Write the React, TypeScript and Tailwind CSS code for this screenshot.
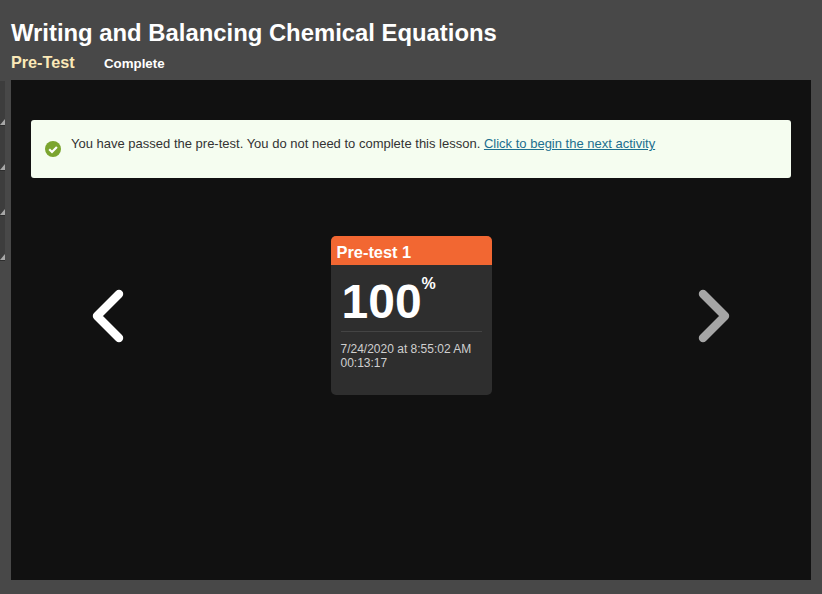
import { ChevronLeft, ChevronRight } from "lucide-react";

function RailTab() {
  return (
    <div className="relative h-[45px] w-[5px] border-b border-[#2e2e2e] bg-[#3d3d3d]">
      <span className="absolute bottom-0 right-0 h-0 w-0 border-b-[6px] border-l-[5px] border-b-[#a8a8a8] border-l-transparent" />
    </div>
  );
}

function CheckBadge() {
  return (
    <svg viewBox="0 0 16 16" className="mt-[2px] h-[16px] w-[16px] shrink-0">
      <circle cx="8" cy="8" r="8" fill="#7ba52f" />
      <path d="M4.2 8.2 7 11l4.9-5" fill="none" stroke="#fff" strokeWidth="2.2" />
    </svg>
  );
}

function ResultCard() {
  return (
    <div className="h-[159px] w-[161px] shrink-0 overflow-hidden rounded-[5px] bg-[#2e2e2e]">
      <div className="h-[29px] bg-[#f26732] pl-[6px] text-[16.4px] font-bold leading-[33px] text-white">
        Pre-test 1
      </div>
      <div className="px-[10px]">
        <div className="flex h-[67px] items-start border-b border-[#444] pl-[1px]">
          <span className="mt-[9px] text-[48px] font-bold leading-[56px] text-white">100</span>
          <span className="mt-[10px] text-[16px] font-bold leading-[18px] text-white">%</span>
        </div>
        <div className="mt-[10px] text-[12px] leading-[14px] text-[#d0d0d0]">
          <div>7/24/2020 at 8:55:02 AM</div>
          <div>00:13:17</div>
        </div>
      </div>
    </div>
  );
}

export default function App() {
  return (
    <div className="flex h-[594px] w-[822px] flex-col overflow-hidden bg-[#484848] font-['Liberation_Sans',Arial,sans-serif]">
      <header className="h-[80px] shrink-0 pl-[11px]">
        <h1 className="pt-[18px] text-[23.85px] font-bold leading-[30px] text-white">
          Writing and Balancing Chemical Equations
        </h1>
        <div className="flex items-baseline pt-[3px]">
          <span className="w-[93px] text-[16.2px] font-bold leading-[22px] text-[#fbe9b7]">Pre-Test</span>
          <span className="text-[13.3px] font-bold text-white">Complete</span>
        </div>
      </header>

      <div className="flex h-[500px]">
        <div className="w-[11px] shrink-0 pt-[1px]">
          <RailTab />
          <RailTab />
          <RailTab />
          <RailTab />
        </div>
        <main className="flex w-[800px] flex-col items-center bg-[#111111] px-[20px] pt-[40px]">
          <div className="flex h-[58px] w-full gap-[10px] rounded-[3px] bg-[#f5fdf0] pl-[14px] pt-[16px] text-[13px] leading-[16px] text-[#333]">
            <div className="pt-[3px]">
              <CheckBadge />
            </div>
            <p>
              You have passed the pre-test. You do not need to complete this lesson.{" "}
              <a href="#" className="text-[#1c6f8f] underline">
                Click to begin the next activity
              </a>
            </p>
          </div>

          <div className="mt-[58px] flex w-full items-center justify-between px-[33px]">
            <ChevronLeft className="h-[88px] w-[88px] text-white" strokeWidth={2.3} />
            <ResultCard />
            <ChevronRight className="h-[88px] w-[88px] text-[#a6a6a6]" strokeWidth={2.3} />
          </div>
        </main>
      </div>
    </div>
  );
}
